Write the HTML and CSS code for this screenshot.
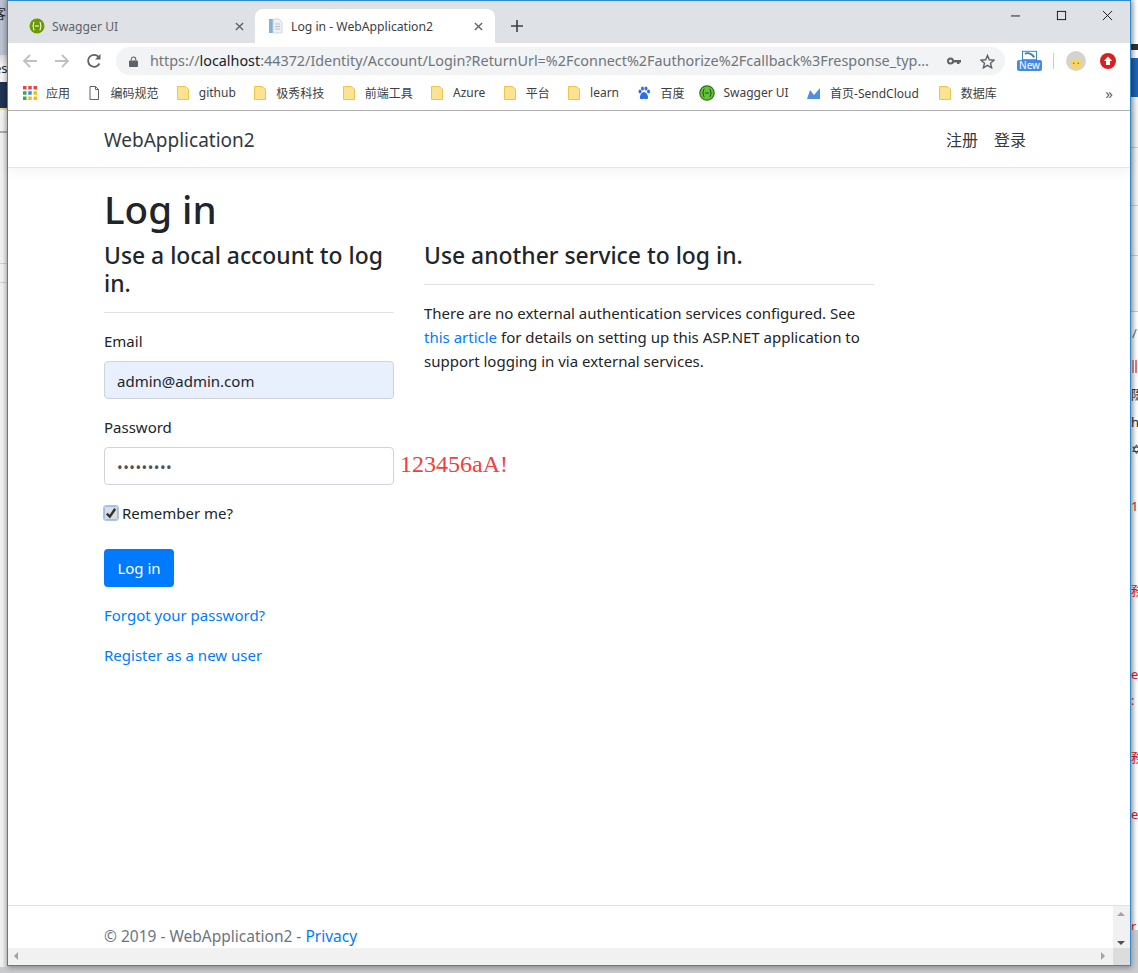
FILE: index.html
```html
<!DOCTYPE html>
<html>
  <head>
    <meta charset="utf-8">
    <title>Log in - WebApplication2</title>
    <link rel="stylesheet" href="styles.css">
  </head>
  <body>
    <div class="behind behind-left">
      <span class="bit bit-kanji">客</span>
      <span class="bit bit-es">es</span>
    </div>
    <div class="behind behind-right">
      <span class="bit r-slash">/</span>
      <span class="bit r-bars"></span>
      <span class="bit r-kanji0">隱</span>
      <span class="bit r-hi">hi</span>
      <span class="bit r-gear">✡</span>
      <span class="bit r-18">18</span>
      <span class="bit r-kanji1">務</span>
      <span class="bit r-e1">e</span>
      <span class="bit r-colon">:</span>
      <span class="bit r-kanji2">務</span>
      <span class="bit r-e2">e</span>
      <span class="bit r-r">r</span>
    </div>

    <div class="window">
      <header class="tabstrip">
        <div class="tab">
          <svg class="favicon" viewBox="0 0 16 16"><circle cx="8" cy="8" r="7.5" fill="#6a9a00"/><path d="M5.5 4Q4.5 4 4.5 6T3.5 8Q4.5 8 4.5 10T5.5 12M10.5 4Q11.5 4 11.5 6T12.5 8Q11.5 8 11.5 10T10.5 12M6 8H10" fill="none" stroke="#fff" stroke-width="1.1"/></svg>
          <span class="tab-title">Swagger UI</span>
          <svg class="tab-close" viewBox="0 0 10 10"><path d="M1 1L9 9M9 1L1 9" stroke="#5f6368" stroke-width="1.5"/></svg>
        </div>
        <div class="tab tab-active">
          <svg class="favicon" viewBox="0 0 16 16"><path d="M1 1H5V15H1Z" fill="#7fb2dd"/><path d="M5 1H11L14 4V15H5Z" fill="#eef1f4" stroke="#c9d0d8" stroke-width=".8"/><path d="M7 6H12M7 8.5H12M7 11H12" stroke="#b5bec8"/></svg>
          <span class="tab-title">Log in - WebApplication2</span>
          <svg class="tab-close" viewBox="0 0 10 10"><path d="M1 1L9 9M9 1L1 9" stroke="#5f6368" stroke-width="1.5"/></svg>
        </div>
        <svg class="new-tab" viewBox="0 0 12 12"><path d="M6 0V12M0 6H12" stroke="#3c4043" stroke-width="1.6"/></svg>
        <div class="caption">
          <svg viewBox="0 0 12 12"><path d="M1 6.5H11" stroke="#111"/></svg>
          <svg viewBox="0 0 12 12"><rect x="1.5" y="1.5" width="9" height="9" fill="none" stroke="#111"/></svg>
          <svg viewBox="0 0 12 12"><path d="M1 1L11 11M11 1L1 11" stroke="#111"/></svg>
        </div>
      </header>

      <div class="toolbar">
        <svg class="nav-icon" viewBox="0 0 16 16"><path d="M15 8H2M8 2L2 8L8 14" fill="none" stroke="#bdc1c6" stroke-width="1.8"/></svg>
        <svg class="nav-icon" viewBox="0 0 16 16"><path d="M1 8H14M8 2L14 8L8 14" fill="none" stroke="#bdc1c6" stroke-width="1.8"/></svg>
        <svg class="nav-icon" viewBox="0 0 16 16"><path d="M13.5 10.5A6 6 0 1 1 12.4 3.6" fill="none" stroke="#5f6368" stroke-width="1.8"/><path d="M14.5 1V6.5H9Z" fill="#5f6368"/></svg>
        <div class="omnibox">
          <svg class="lock" viewBox="0 0 10 12"><path d="M2.5 5V3.5A2.5 2.5 0 0 1 7.5 3.5V5" fill="none" stroke="#5f6368" stroke-width="1.2"/><rect y="5" width="10" height="7" rx="1" fill="#5f6368"/></svg>
          <span class="url">https://<b>localhost</b>:44372/Identity/Account/Login?ReturnUrl=%2Fconnect%2Fauthorize%2Fcallback%3Fresponse_typ...</span>
          <svg class="key" viewBox="0 0 14 8"><circle cx="3.5" cy="4" r="2.5" fill="none" stroke="#5f6368" stroke-width="2"/><path d="M6 3H14V5.5H12.5V7H10V5.5H6Z" fill="#5f6368"/></svg>
          <svg class="star" viewBox="0 0 16 16"><path d="M8 1.5L10 6.2L15 6.6L11.2 9.9L12.4 14.8L8 12.2L3.6 14.8L4.8 9.9L1 6.6L6 6.2Z" fill="none" stroke="#5f6368" stroke-width="1.5"/></svg>
        </div>
        <div class="ext-new">
          <svg viewBox="0 0 16 10"><rect x=".5" y=".5" width="15" height="9" fill="#fff" stroke="#2f7fc1"/><path d="M3 3Q9 1 13 7" stroke="#2f7fc1" stroke-width="2" fill="none"/></svg>
          <span class="new-badge">New</span>
        </div>
        <span class="ext-sep"></span>
        <svg class="ext-avatar" viewBox="0 0 18 18"><circle cx="9" cy="9" r="9" fill="#d3d3d3"/><path d="M4 6L6.5 8H11.5L14 6V14Q9 19 4 14Z" fill="#f6d568"/><circle cx="7" cy="11" r=".7" fill="#8a6a20"/><circle cx="11" cy="11" r=".7" fill="#8a6a20"/></svg>
        <svg class="ext-up" viewBox="0 0 16 16"><circle cx="8" cy="8" r="8" fill="#d9201c"/><path d="M8 3.5L12.2 8H10V12H6V8H3.8Z" fill="#fff"/></svg>
      </div>

      <nav class="bookmarks">
        <span class="mark">
          <svg class="mark-icon" viewBox="0 0 12 12"><rect width="3" height="3" fill="#e8453c"/><rect x="4.5" width="3" height="3" fill="#e8453c"/><rect x="9" width="3" height="3" fill="#e8453c"/><rect y="4.5" width="3" height="3" fill="#34a853"/><rect x="4.5" y="4.5" width="3" height="3" fill="#4285f4"/><rect x="9" y="4.5" width="3" height="3" fill="#fbbc05"/><rect y="9" width="3" height="3" fill="#34a853"/><rect x="4.5" y="9" width="3" height="3" fill="#fbbc05"/><rect x="9" y="9" width="3" height="3" fill="#fbbc05"/></svg>
          应用
        </span>
        <span class="mark">
          <svg class="folder" viewBox="0 0 12 14"><path d="M2 .5H7.5L10.5 3.5V13.5H2ZM7.5 .5V3.5H10.5" fill="#fff" stroke="#5f6368"/></svg>
          编码规范
        </span>
        <span class="mark"><svg class="folder" viewBox="0 0 12 14"><path d="M.5 .5H8L11.5 3V13.5H.5Z" fill="#fde293" stroke="#eec643"/></svg>github</span>
        <span class="mark"><svg class="folder" viewBox="0 0 12 14"><path d="M.5 .5H8L11.5 3V13.5H.5Z" fill="#fde293" stroke="#eec643"/></svg>极秀科技</span>
        <span class="mark"><svg class="folder" viewBox="0 0 12 14"><path d="M.5 .5H8L11.5 3V13.5H.5Z" fill="#fde293" stroke="#eec643"/></svg>前端工具</span>
        <span class="mark"><svg class="folder" viewBox="0 0 12 14"><path d="M.5 .5H8L11.5 3V13.5H.5Z" fill="#fde293" stroke="#eec643"/></svg>Azure</span>
        <span class="mark"><svg class="folder" viewBox="0 0 12 14"><path d="M.5 .5H8L11.5 3V13.5H.5Z" fill="#fde293" stroke="#eec643"/></svg>平台</span>
        <span class="mark"><svg class="folder" viewBox="0 0 12 14"><path d="M.5 .5H8L11.5 3V13.5H.5Z" fill="#fde293" stroke="#eec643"/></svg>learn</span>
        <span class="mark mark-baidu"><svg class="mark-icon" viewBox="0 0 14 14"><g fill="#2f6fe0"><ellipse cx="3" cy="5.5" rx="1.5" ry="2"/><ellipse cx="5.5" cy="2.5" rx="1.5" ry="2"/><ellipse cx="9" cy="2.5" rx="1.5" ry="2"/><ellipse cx="11.5" cy="5.5" rx="1.5" ry="2"/><path d="M7 6C9.5 6 11.5 10 11 12C10.5 14 8 12.8 7 12.8S3.5 14 3 12C2.5 10 4.5 6 7 6Z"/></g></svg>百度</span>
        <span class="mark"><svg class="swagger-icon" viewBox="0 0 16 16"><circle cx="8" cy="8" r="7.2" fill="#62c72f" stroke="#2f6d20" stroke-width="1.2"/><path d="M5.5 4Q4.5 4 4.5 6T3.5 8Q4.5 8 4.5 10T5.5 12M10.5 4Q11.5 4 11.5 6T12.5 8Q11.5 8 11.5 10T10.5 12M6 8H10" fill="none" stroke="#234" stroke-width=".9"/></svg>Swagger UI</span>
        <span class="mark mark-cloud"><svg class="mark-icon" viewBox="0 0 14 12"><path d="M0 12L3 3L7 8L13 1V12Z" fill="#4f8fdc"/></svg>首页-SendCloud</span>
        <span class="mark"><svg class="folder" viewBox="0 0 12 14"><path d="M.5 .5H8L11.5 3V13.5H.5Z" fill="#fde293" stroke="#eec643"/></svg>数据库</span>
        <span class="more">»</span>
      </nav>

      <main class="page">
        <div class="topnav">
          <a class="brand">WebApplication2</a>
          <div class="topnav-links"><a>注册</a><a>登录</a></div>
        </div>
        <div class="content">
          <h1>Log in</h1>
          <div class="columns">
            <section class="col-local">
              <h4>Use a local account to log in.</h4>
              <hr>
              <label class="field-label">Email</label>
              <div class="input input-filled">admin@admin.com</div>
              <label class="field-label">Password</label>
              <div class="pass-row">
                <div class="input"><span class="dots">•••••••••</span></div>
                <span class="note">123456aA!</span>
              </div>
              <div class="remember">
                <span class="check"><svg viewBox="0 0 10 10"><path d="M1.5 5.5L4 8L8.5 1.5" fill="none" stroke="#333" stroke-width="2"/></svg></span>
                Remember me?
              </div>
              <button class="btn">Log in</button>
              <p class="link-row"><a>Forgot your password?</a></p>
              <p class="link-row"><a>Register as a new user</a></p>
            </section>
            <section class="col-other">
              <h4>Use another service to log in.</h4>
              <hr>
              <p>There are no external authentication services configured. See <a>this article</a> for details on setting up this ASP.NET application to support logging in via external services.</p>
            </section>
          </div>
        </div>
        <footer class="foot">
          <div class="foot-text">© 2019 - WebApplication2 - <a>Privacy</a></div>
          <div class="vscroll"><i class="arrow-up"></i><i class="arrow-down"></i></div>
        </footer>
      </main>
      <div class="hscroll"><i class="arrow-left"></i><i class="arrow-right"></i><span class="corner"></span></div>
    </div>
  </body>
</html>
```

FILE: styles.css
```css
html, body {
  margin: 0;
  padding: 0;
  height: 973px;
  overflow: hidden;
}
body {
  position: relative;
  background-color: #c9cacd;
  font-family: "Noto Sans", "Noto Sans CJK SC", sans-serif;
  color: #212529;
}
a {
  color: #007bff;
}

/* desktop showing at the sides of the browser window */
.behind {
  position: absolute;
  top: 0;
  overflow: hidden;
  font-size: 13px;
}
.behind-left {
  left: 0;
  width: 7px;
  height: 967px;
  background:
    linear-gradient(to right, rgba(0, 0, 0, 0) 2px, rgba(0, 0, 0, .14)),
    linear-gradient(to bottom,
      #b9c0cf 55px, #d8d8dc 55px, #f3f3f3 66px, #f3f3f3 82px,
      #1f3355 82px, #1f3355 108px, #e8d890 108px, #e8d890 110px,
      #f0f0f0 110px, #f0f0f0 131px, #a9adb5 131px, #a9adb5 133px,
      #f0f0f0 133px, #f0f0f0 263px, #d0d0d0 263px, #d0d0d0 264px,
      #f0f0f0 264px, #f0f0f0 282px, #d0d0d0 282px, #d0d0d0 283px,
      #f0f0f0 283px);
}
.behind-right {
  right: 0;
  width: 7px;
  height: 930px;
  background:
    linear-gradient(to right, rgba(0, 0, 0, .18), rgba(0, 0, 0, 0) 6px),
    linear-gradient(to bottom,
      #fff 44px, #333 44px, #333 50px, #fff 50px, #fff 58px,
      #1f63b5 58px, #1f63b5 97px, #f4f4f4 97px, #f4f4f4 147px,
      #ccc 147px, #ccc 148px, #f4f4f4 148px, #f4f4f4 205px,
      #ccc 205px, #ccc 206px, #f4f4f4 206px, #f4f4f4 255px,
      #ccc 255px, #ccc 256px, #f4f4f4 256px, #f4f4f4 311px,
      #ccc 311px, #ccc 312px, #fff 312px);
}
.bit {
  position: absolute;
  line-height: 16px;
}
.bit-kanji { top: 5px; left: -7px; }
.bit-es { top: 60px; left: -6px; }
.r-slash { top: 325px; left: 1px; color: #666; }
.r-bars {
  top: 360px;
  left: 1px;
  width: 5px;
  height: 13px;
  background: repeating-linear-gradient(to right, #e8746f 0, #e8746f 2px, #fff 2px, #fff 3px);
}
.r-kanji0 { top: 386px; left: 0; }
.r-hi { top: 414px; left: 0; }
.r-gear { top: 441px; left: 0; }
.r-18 { top: 498px; left: 0; color: #e81010; }
.r-kanji1 { top: 582px; left: 0; color: #e81010; }
.r-e1 { top: 666px; left: 0; color: #e81010; }
.r-colon { top: 692px; left: 0; color: #e81010; }
.r-kanji2 { top: 749px; left: 0; color: #e81010; }
.r-e2 { top: 806px; left: 0; color: #e81010; }
.r-r { top: 918px; left: 0; color: #e81010; }

/* browser window */
.window {
  position: absolute;
  left: 7px;
  top: 0;
  width: 1122px;
  height: 964px;
  display: flex;
  flex-flow: column;
  border: 1px solid #2a8ad4;
  box-shadow: 1px 2px 5px rgba(0, 0, 0, .3);
  background: #fff;
}

.tabstrip {
  height: 42px;
  flex: none;
  display: flex;
  align-items: flex-end;
  background: #dee1e6;
}
.tab {
  width: 247px;
  height: 34px;
  padding: 0 7px 0 21px;
  box-sizing: border-box;
  display: flex;
  align-items: center;
  font-size: 12.2px;
  color: #5f6368;
}
.tab-active {
  width: 240px;
  padding: 0 8px 0 13px;
  background: #fff;
  border-radius: 8px 8px 0 0;
  color: #3c4043;
}
.favicon {
  width: 16px;
  height: 16px;
  flex: none;
  margin-right: 7px;
}
.tab-title {
  flex: 1;
}
.tab-close {
  width: 9px;
  height: 9px;
  margin-right: 4px;
}
.new-tab {
  width: 12px;
  height: 12px;
  margin: 0 0 11px 16px;
}
.caption {
  margin: 0 17px 0 auto;
  align-self: flex-start;
  display: flex;
  gap: 35px;
  padding-top: 9px;
}
.caption svg {
  width: 11px;
  height: 11px;
}

.toolbar {
  height: 34px;
  flex: none;
  padding-top: 2px;
  box-sizing: border-box;
  display: flex;
  align-items: center;
}
.nav-icon {
  width: 16px;
  height: 16px;
  margin-left: 14px;
  margin-right: 2px;
}
.omnibox {
  width: 889px;
  height: 28px;
  margin-left: 12px;
  padding: 0 10px 0 13px;
  box-sizing: border-box;
  display: flex;
  align-items: center;
  border-radius: 14px;
  background: #f1f3f4;
  font-size: 14.36px;
  color: #70757a;
}
.lock {
  width: 9px;
  height: 11px;
  margin-right: 12px;
  flex: none;
}
.url {
  flex: 1;
  margin-bottom: 2px;
  white-space: nowrap;
  overflow: hidden;
}
.url b {
  font-weight: 400;
  color: #202124;
}
.key {
  width: 14px;
  height: 8px;
  flex: none;
  margin: 0 19px 0 16px;
}
.star {
  width: 15px;
  height: 15px;
  flex: none;
}
.ext-new {
  width: 25px;
  height: 24px;
  margin-left: 12px;
}
.ext-new svg {
  display: block;
  width: 15px;
  height: 11px;
  margin: 1px auto 0;
}
.new-badge {
  display: block;
  margin-top: -1px;
  height: 11px;
  border-radius: 2px;
  background: #4a88e8;
  color: #fff;
  font-size: 10px;
  line-height: 11px;
  text-align: center;
}
.ext-sep {
  width: 1px;
  height: 16px;
  margin-left: 11px;
  background: #ccc;
}
.ext-avatar {
  width: 20px;
  height: 20px;
  margin-left: 12px;
}
.ext-up {
  width: 16px;
  height: 16px;
  margin-left: 14px;
}

.bookmarks {
  height: 34px;
  flex: none;
  padding: 0 0 2px 15px;
  box-sizing: border-box;
  display: flex;
  align-items: center;
  border-bottom: 1px solid #b0b0b0;
  font-size: 12px;
  color: #3c4043;
}
.mark {
  display: flex;
  align-items: center;
  white-space: nowrap;
  margin-right: 18.4px;
}
.mark-baidu {
  margin-right: 15px;
}
.mark-cloud {
  margin-right: 20px;
}
.mark-icon {
  width: 14px;
  height: 14px;
  margin-right: 9px;
}
.swagger-icon {
  width: 16px;
  height: 16px;
  margin-right: 8px;
}
.folder {
  width: 12px;
  height: 14px;
  margin-right: 10px;
}
.more {
  margin-left: auto;
  margin-right: 17px;
  font-size: 15px;
  color: #5f6368;
}

/* page inside the browser */
.page {
  flex: 1;
  min-height: 0;
  display: flex;
  flex-flow: column;
}
.topnav {
  height: 57px;
  flex: none;
  padding: 0 104px 0 96px;
  box-sizing: border-box;
  display: flex;
  align-items: center;
  justify-content: space-between;
  border-bottom: 1px solid #e7e7e7;
  box-shadow: 0 4px 12px rgba(0, 0, 0, .05);
  font-size: 19px;
}
.brand {
  margin-top: 2px;
  color: #343a40;
}
.topnav-links {
  display: flex;
  gap: 16px;
  font-size: 16px;
}
.topnav-links a {
  color: #343a40;
}
.content {
  flex: 1;
  padding: 0 96px;
}
h1 {
  margin: 17px 0 9px;
  font-size: 38.6px;
  font-weight: 500;
  line-height: 48px;
}
.columns {
  display: flex;
  gap: 30px;
}
.col-local {
  width: 290px;
}
.col-other {
  width: 450px;
}
h4 {
  margin: 0;
  font-size: 22.9px;
  font-weight: 500;
  line-height: 28px;
}
hr {
  margin: 14px 0 16px;
  border: 0;
  border-top: 1px solid #dee2e6;
}
.field-label {
  display: block;
  margin-bottom: 8px;
  font-size: 15px;
  line-height: 24px;
}
.input {
  height: 38px;
  margin-bottom: 16px;
  padding: 1px 12px 0;
  box-sizing: border-box;
  display: flex;
  align-items: center;
  border: 1px solid #ced4da;
  border-radius: 4px;
  font-size: 15px;
  color: #495057;
}
.input-filled {
  background: #e8f0fe;
  color: #212529;
}
.pass-row {
  position: relative;
}
.dots {
  letter-spacing: .5px;
}
.note {
  position: absolute;
  left: 296px;
  top: 2px;
  font-family: "Liberation Serif", serif;
  font-size: 24px;
  line-height: 30px;
  color: #f04040;
  white-space: nowrap;
}
.remember {
  display: flex;
  align-items: center;
  height: 24px;
  margin-bottom: 24px;
  font-size: 15px;
}
.check {
  width: 12px;
  height: 12px;
  margin-right: 4px;
  display: flex;
  border: 1px solid #9bbcec;
  border-radius: 2px;
  outline: 1px solid #a8c4f0;
  background: #ddd;
}
.btn {
  height: 38px;
  width: 70px;
  padding: 0;
  display: block;
  border: 0;
  border-radius: 4px;
  background: #007bff;
  color: #fff;
  font-family: inherit;
  font-size: 15px;
}
.link-row {
  margin: 16px 0;
  font-size: 15px;
  line-height: 24px;
}
.col-other p {
  margin: 0;
  font-size: 15px;
  line-height: 24px;
}
.foot {
  height: 43px;
  flex: none;
  display: flex;
  border-top: 1px solid #dee2e6;
  box-sizing: border-box;
  color: #6c757d;
  font-size: 15.5px;
}
.foot-text {
  flex: 1;
  padding: 18px 0 0 96px;
  line-height: 24px;
  height: 24px;
  overflow: hidden;
}
.vscroll {
  width: 17px;
  background: #f1f1f1;
  position: relative;
}
.hscroll {
  height: 17px;
  flex: none;
  position: relative;
  background: #f1f1f1;
}
.corner {
  position: absolute;
  right: 0;
  top: 0;
  width: 17px;
  height: 17px;
  background: #dcdcdc;
}
.arrow-up, .arrow-down, .arrow-left, .arrow-right {
  position: absolute;
  width: 0;
  height: 0;
  border: 4px solid transparent;
}
.arrow-up { left: 4px; top: 2px; border-bottom-color: #a3a3a3; }
.arrow-down { left: 4px; bottom: -1px; border-top-color: #505050; }
.arrow-left { left: 2px; top: 4px; border-right-color: #a3a3a3; }
.arrow-right { right: 21px; top: 4px; border-left-color: #a3a3a3; }
```
